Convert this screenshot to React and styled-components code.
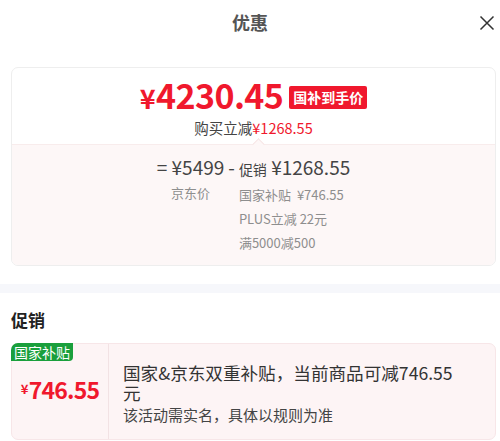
import styled, { createGlobalStyle } from 'styled-components'

const GlobalStyle = createGlobalStyle`
	body {
		margin: 0;
		background: #fff;
		font-family: "Noto Sans CJK SC", "Noto Sans", sans-serif;
		color: #333;
	}
`

const Page = styled.div`
	width: 500px;
	height: 441px;
	overflow: hidden;
	background: #fff;
`

const Header = styled.div`
	position: relative;
	height: 43px;
	display: flex;
	align-items: center;
	justify-content: center;
	font-size: 18px;
	font-weight: 700;
	color: #555;
`

const Close = styled.svg`
	position: absolute;
	right: 5px;
	top: 15px;
	width: 16px;
	height: 16px;
`

const Card = styled.div`
	margin: 24px 4px 0 11px;
	border: 1px solid #eeeeee;
	border-radius: 7px;
	overflow: hidden;
`

const Summary = styled.div`
	display: flex;
	flex-direction: column;
	align-items: center;
	padding: 7px 0 6px;
`

const PriceRow = styled.div`
	display: flex;
	align-items: center;
	gap: 6px;
	height: 42px;
`

const BigPrice = styled.span`
	font-size: 34px;
	line-height: 42px;
	font-weight: 700;
	color: #f0182d;
	letter-spacing: -0.6px;
`

const Yen = styled.span`
	font-size: ${({ size }) => size || '27px'};
	margin-right: 1px;
`

const RedTag = styled.span`
	background: #f0182d;
	color: #fff;
	font-size: 14px;
	font-weight: 700;
	line-height: 23px;
	padding: 0 4px;
	border-radius: 2px;
	margin-top: 2px;
`

const SaveLine = styled.div`
	font-size: 14.5px;
	line-height: 20px;
	margin-top: 1px;
	color: #444;
`

const Red = styled.span`
	color: #f0182d;
`

const Breakdown = styled.div`
	position: relative;
	background: #fdf7f7;
	border-top: 1px solid #f8ecec;
	display: flex;
	justify-content: center;
	align-items: flex-start;
	padding: 10px 0 10px;

	&::before {
		content: '';
		position: absolute;
		top: -5px;
		left: 242px;
		width: 8px;
		height: 8px;
		background: #fdf7f7;
		border-top: 1px solid #f6e4e4;
		border-left: 1px solid #f6e4e4;
		transform: rotate(45deg);
	}
`

const Column = styled.div`
	display: flex;
	flex-direction: column;
	align-items: ${({ align }) => align || 'flex-start'};
`

const Formula = styled.div`
	font-size: 19px;
	line-height: 24px;
	color: #444;
	white-space: pre;
	margin-bottom: 2px;
`

const Small = styled.span`
	font-size: 14px;
`

const Minus = styled.div`
	font-size: 19px;
	line-height: 24px;
	color: #444;
	margin: 0 4px;
`

const Note = styled.div`
	font-size: 13px;
	line-height: 24px;
	color: #8e8e8e;
`

const Amount = styled.span`
	margin-left: 6px;
`

const Band = styled.div`
	height: 9px;
	margin-top: 18px;
	background: #f6f7fb;
`

const SectionTitle = styled.div`
	font-size: 17px;
	font-weight: 700;
	color: #222;
	line-height: 24px;
	padding: 15px 11px 0;
`

const Promo = styled.div`
	position: relative;
	margin: 11px 4px 0 11px;
	height: 95px;
	border: 1px solid #f7e6e8;
	border-radius: 7px;
	background: #fdf4f5;
	display: flex;
`

const GreenTag = styled.span`
	position: absolute;
	top: -1px;
	left: -1px;
	background: #1a9f3c;
	color: #fff;
	font-size: 14px;
	line-height: 18px;
	padding: 0 3px;
	border-radius: 7px 0 4px 0;
`

const PromoAmount = styled.div`
	width: 96px;
	flex-shrink: 0;
	border-right: 1px solid #f2e2e4;
	display: flex;
	align-items: center;
	justify-content: center;
	padding-bottom: 6px;
	font-size: 23px;
	font-weight: 700;
	letter-spacing: -0.8px;
	color: #f0182d;
`

const PromoText = styled.div`
	width: 340px;
	padding: 19px 0 0 14px;
	color: #333;
`

const PromoMain = styled.div`
	font-size: 17.6px;
	line-height: 20px;
`

const PromoSub = styled.div`
	font-size: 15px;
	line-height: 20px;
	margin-top: 2px;
	color: #444;
`

export default function App() {
	return (
		<Page>
			<GlobalStyle />
			<Header>
				优惠
				<Close viewBox="0 0 16 16">
					<path d="M1.5 1.5 L14.5 14.5 M14.5 1.5 L1.5 14.5" stroke="#333" strokeWidth="1.5" fill="none" />
				</Close>
			</Header>
			<Card>
				<Summary>
					<PriceRow>
						<BigPrice>
							<Yen>¥</Yen>4230.45
						</BigPrice>
						<RedTag>国补到手价</RedTag>
					</PriceRow>
					<SaveLine>
						购买立减<Red>¥1268.55</Red>
					</SaveLine>
				</Summary>
				<Breakdown>
					<Column align="center">
						<Formula>= ¥5499</Formula>
						<Note>京东价</Note>
					</Column>
					<Minus>-</Minus>
					<Column>
						<Formula>
							<Small>促销</Small> ¥1268.55
						</Formula>
						<Note>
							国家补贴<Amount>¥746.55</Amount>
						</Note>
						<Note>PLUS立减 22元</Note>
						<Note>满5000减500</Note>
					</Column>
				</Breakdown>
			</Card>
			<Band />
			<SectionTitle>促销</SectionTitle>
			<Promo>
				<GreenTag>国家补贴</GreenTag>
				<PromoAmount>
					<Yen size="13px">¥</Yen>746.55
				</PromoAmount>
				<PromoText>
					<PromoMain>国家&amp;京东双重补贴，当前商品可减746.55元</PromoMain>
					<PromoSub>该活动需实名，具体以规则为准</PromoSub>
				</PromoText>
			</Promo>
		</Page>
	)
}
